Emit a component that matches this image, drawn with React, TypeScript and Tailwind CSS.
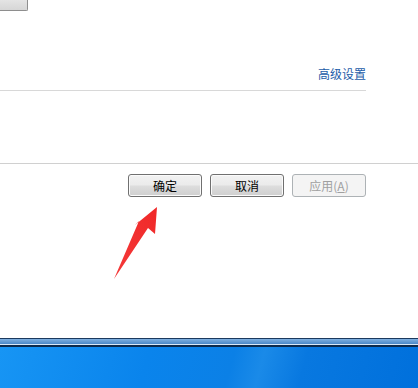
import React from "react";

const font = { fontFamily: '"Noto Sans CJK SC", "Microsoft YaHei", sans-serif' };

function WinButton({ children, disabled }: { children: React.ReactNode; disabled?: boolean }) {
  if (disabled) {
    return (
      <div className="w-[74px] h-[23px] rounded-[3px] border border-[#adb2b5] bg-[#f4f4f4] flex items-center justify-center text-[12px] text-[#a0a0a0]">
        {children}
      </div>
    );
  }
  return (
    <div className="w-[74px] h-[23px] rounded-[3px] border border-[#707070] bg-[linear-gradient(to_bottom,#f2f2f2_0%,#ebebeb_48%,#dddddd_52%,#cfcfcf_100%)] shadow-[inset_0_0_0_1px_#fbfbfb] flex items-center justify-center text-[12px] text-black">
      {children}
    </div>
  );
}

export default function App() {
  return (
    <div className="w-[418px] h-[388px] bg-white overflow-hidden flex flex-col relative" style={font}>
      {/* fragment of a button at top-left */}
      <div className="h-[11px] w-[28px] border-r border-b border-[#8e8e8e] rounded-br-[2px] bg-[linear-gradient(to_bottom,#e4e4e4,#d6d6d6)]" />
      <div className="h-[55px]" />
      <div className="flex justify-end pr-[52px]">
        <span className="text-[12px] leading-[16px] text-[#1c5ca8]">高级设置</span>
      </div>
      <div className="h-[8px]" />
      <div className="h-px w-[366px] bg-[#d8d8d8]" />
      <div className="h-[72px]" />
      <div className="h-px w-full bg-[#d0d0d0]" />
      <div className="h-[10px]" />
      <div className="flex justify-end pr-[52px] gap-[8px]">
        <WinButton>确定</WinButton>
        <WinButton>取消</WinButton>
        <WinButton disabled>
          <span>
            应用(<span className="underline">A</span>)
          </span>
        </WinButton>
      </div>
      <div className="flex-1" />
      {/* taskbar */}
      <div className="h-[50px] flex flex-col">
        <div className="h-px bg-[#1b3a5e]" />
        <div className="h-[5px] bg-[linear-gradient(to_bottom,#7fb0e0,#4a88c8)]" />
        <div className="h-px bg-[#d8e8f8]" />
        <div className="h-[2px] bg-[#0c2a4c]" />
        <div className="flex-1 bg-[linear-gradient(105deg,#1795f4_0%,#0a84ec_35%,#0b80e6_55%,#1a8ae8_62%,#0878e0_72%,#0070dc_100%)]" />
      </div>
      {/* red arrow annotation */}
      <svg className="absolute left-0 top-0" width="418" height="388" viewBox="0 0 418 388">
        <defs>
          <linearGradient id="ar" x1="0" y1="1" x2="1" y2="0">
            <stop offset="0" stopColor="#f43a3a" />
            <stop offset="1" stopColor="#f02828" />
          </linearGradient>
        </defs>
        <polygon
          points="157,207 155,234 148,228 114,279 139,221 135,225"
          fill="url(#ar)"
        />
      </svg>
    </div>
  );
}
